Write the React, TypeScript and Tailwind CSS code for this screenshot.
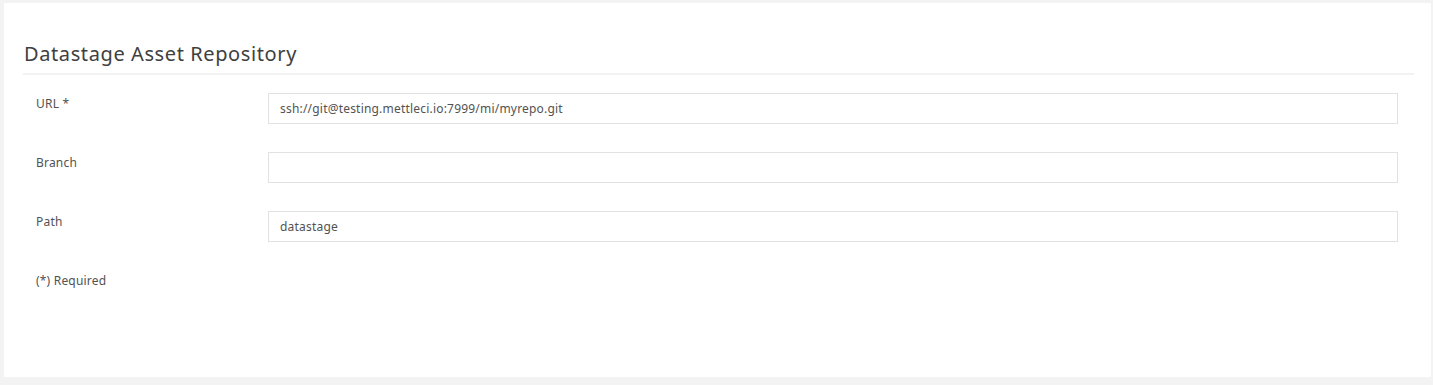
import React from "react";

const font = { fontFamily: '"Noto Sans", "Open Sans", Arial, sans-serif' };

function Row({ label, value }: { label: string; value: string }) {
  return (
    <div className="flex items-start h-[59px]">
      <div className="w-[264px] pl-[32px] pt-[3px] text-[12px] leading-[16px] tracking-[0.2px] text-[#525252]">{label}</div>
      <div className="flex-1 mr-[33px] h-[31px] border border-[#e2e2e2] bg-white flex items-center px-[11px] text-[12px] tracking-[0.2px] text-[#525252]">
        {value}
      </div>
    </div>
  );
}

export default function App() {
  return (
    <div className="w-[1433px] h-[385px] bg-[#f3f3f3] pt-[3px] pl-[4px]" style={font}>
      <div className="w-[1427px] h-[374px] bg-white pt-[38px]">
        <div className="ml-[19px] mr-[17px] border-b-2 border-[#f2f2f2] pb-[6px]">
          <h1 className="pl-[1px] text-[20px] leading-[26px] tracking-[0.6px] text-[#404040]">Datastage Asset Repository</h1>
        </div>
        <div className="pt-[18px]">
          <Row label="URL *" value="ssh://git@testing.mettleci.io:7999/mi/myrepo.git" />
          <Row label="Branch" value="" />
          <Row label="Path" value="datastage" />
          <div className="pl-[32px] pt-[3px] text-[12px] leading-[16px] tracking-[0.2px] text-[#525252]">(*) Required</div>
        </div>
      </div>
    </div>
  );
}
